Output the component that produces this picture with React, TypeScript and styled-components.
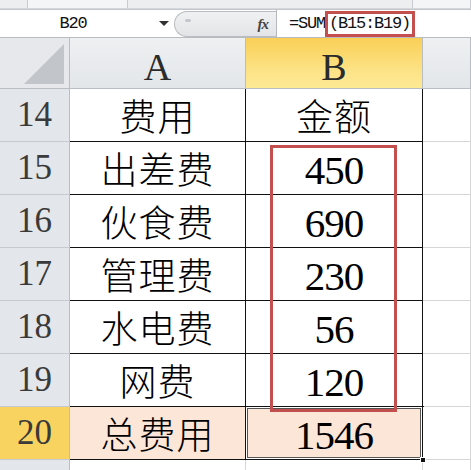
import React from "react";
import styled, { createGlobalStyle, css } from "styled-components";

const GlobalStyle = createGlobalStyle`
  html, body { margin: 0; padding: 0; background: #ffffff; overflow: hidden; }
  body { width: 471px; height: 470px; }
  * { box-sizing: border-box; }
`;

const Page = styled.div`
  width: 471px;
  height: 470px;
  display: flex;
  flex-direction: column;
  overflow: hidden;
  background: #ffffff;
`;

const TopStrip = styled.div`
  flex: none;
  height: 10px;
  display: flex;
  background: #e6e8eb;
  border-bottom: 1px solid #c3c6ca;
`;

const TabBox = styled.div<{ $w: number; $light?: boolean }>`
  width: ${(p) => p.$w}px;
  flex: ${(p) => (p.$w ? "none" : "1")};
  background: ${(p) => (p.$light ? "#f4f5f7" : "#eceef0")};
  border-right: 1px solid #c8cbcf;
  border-bottom: 1px solid #d4d7db;
`;

const FormulaBar = styled.div`
  flex: none;
  height: 28px;
  display: flex;
  align-items: stretch;
  border-bottom: 1px solid #b8bbbf;
  background: #ffffff;
  position: relative;
  z-index: 4;
`;

const NameBox = styled.div`
  width: 174px;
  display: flex;
  align-items: center;
  background: #ffffff;
  position: relative;
`;

const NameText = styled.span`
  flex: 1;
  text-align: center;
  padding-right: 28px;
  font-family: "Liberation Mono", monospace;
  font-size: 17px;
  letter-spacing: -1.2px;
  color: #111;
`;

const DropArrow = styled.span`
  position: absolute;
  right: 5px;
  top: 11px;
  width: 0;
  height: 0;
  border-left: 5px solid transparent;
  border-right: 5px solid transparent;
  border-top: 5px solid #333;
`;

const FxZone = styled.div`
  width: 103px;
  display: flex;
  align-items: center;
  background: #ffffff;
  border-right: 1px solid #b4b7bb;
`;

const Pill = styled.div`
  flex: 1;
  height: 26px;
  margin-top: 1px;
  display: flex;
  align-items: center;
  justify-content: space-between;
  padding: 0 8px 0 10px;
  background: linear-gradient(#f0f1f3, #e2e4e7);
  border: 1px solid #b9bcc0;
  border-right: none;
  border-radius: 14px 0 0 14px;
`;

const Grip = styled.span`
  width: 6px;
  height: 3px;
  border-radius: 2px;
  background: #c3c6ca;
  margin-bottom: 8px;
`;

const FxLabel = styled.span`
  font-family: "Liberation Serif", serif;
  font-style: italic;
  font-weight: bold;
  font-size: 15px;
  color: #444;
  letter-spacing: -1px;
`;

const FormulaInput = styled.div`
  flex: 1;
  display: flex;
  align-items: flex-start;
  padding-left: 12px;
  padding-top: 1px;
  background: #ffffff;
`;

const FormulaText = styled.span`
  font-family: "Liberation Mono", monospace;
  font-size: 17px;
  letter-spacing: -1.2px;
  color: #111;
  white-space: nowrap;
`;

const RangeRef = styled.span`
  display: inline-block;
  height: 26px;
  padding: 0 2px 0 1px;
  border: 3px solid #c3504e;
  line-height: 20px;
`;

const SheetWrap = styled.div`
  position: relative;
  flex: 1;
  min-height: 0;
  overflow: hidden;
`;

const Grid = styled.div`
  display: grid;
  grid-template-columns: 70px 176px 177px 1fr;
  grid-template-rows: 51px repeat(7, 53px) 53px;
`;

const Corner = styled.div`
  background: #e6e8eb;
  border-right: 1px solid #b9bec5;
  border-bottom: 1px solid #b9bec5;
  position: relative;
  &::after {
    content: "";
    position: absolute;
    right: 5px;
    bottom: 4px;
    width: 0;
    height: 0;
    border-left: 40px solid transparent;
    border-bottom: 40px solid #c2c5c9;
  }
`;

const ColHeader = styled.div<{ $active?: boolean }>`
  display: flex;
  align-items: center;
  justify-content: center;
  padding-top: 8px;
  font-family: "Liberation Serif", serif;
  font-size: 38px;
  color: #2b2b2b;
  border-right: 1px solid #b9bec5;
  border-bottom: 1px solid #b9bec5;
  background: ${(p) =>
    p.$active
      ? "linear-gradient(#f9cf56, #fde48a 70%, #fde994)"
      : "linear-gradient(#eef0f2, #e3e6e9)"};
`;

const RowHeader = styled.div<{ $active?: boolean }>`
  display: flex;
  align-items: center;
  justify-content: center;
  font-family: "Liberation Serif", serif;
  font-size: 35px;
  color: #3a3a3a;
  background: ${(p) => (p.$active ? "#f8d35f" : "#e3e6ea")};
  border-right: 1px solid #b9bec5;
  border-bottom: 1px solid #c6cad0;
`;

const Cell = styled.div<{ $table?: boolean; $total?: boolean; $num?: boolean; $selected?: boolean }>`
  position: relative;
  display: flex;
  align-items: center;
  justify-content: center;
  background: ${(p) => (p.$total ? "#fce6d8" : "#ffffff")};
  border-right: 1px solid ${(p) => (p.$table ? "#111" : "#d6d6d6")};
  border-bottom: 1px solid ${(p) => (p.$table ? "#111" : "#d6d6d6")};
  color: #000;
  ${(p) =>
    p.$num
      ? css`
          font-family: "Liberation Serif", serif;
          font-size: 41px;
          letter-spacing: -1px;
          padding-top: 3px;
        `
      : css`
          font-family: "Noto Sans CJK SC", sans-serif;
          font-weight: 300;
          font-size: 37px;
          letter-spacing: 1px;
        `}
  ${(p) =>
    p.$selected &&
    css`
      box-shadow: inset 0 0 0 1px #ffffff, inset 0 0 0 2px #555;
      outline: 1px solid #111;
    `}
`;

const FillHandle = styled.span`
  position: absolute;
  right: -4px;
  bottom: -4px;
  width: 6px;
  height: 6px;
  background: #111;
  border: 1px solid #fff;
  z-index: 2;
`;

const RedOverlay = styled.div`
  position: absolute;
  left: 270px;
  top: 107px;
  width: 127px;
  height: 267px;
  border: 3px solid #c3504e;
  pointer-events: none;
  z-index: 3;
`;

type Row = { n: number; a: string; b: string; total?: boolean };

const rows: Row[] = [
  { n: 14, a: "费用", b: "金额" },
  { n: 15, a: "出差费", b: "450" },
  { n: 16, a: "伙食费", b: "690" },
  { n: 17, a: "管理费", b: "230" },
  { n: 18, a: "水电费", b: "56" },
  { n: 19, a: "网费", b: "120" },
  { n: 20, a: "总费用", b: "1546", total: true },
];

export default function App() {
  return (
    <Page>
      <GlobalStyle />
      <TopStrip>
        <TabBox $w={28} />
        <TabBox $w={100} $light />
        <TabBox $w={285} />
        <TabBox $w={0} $light />
      </TopStrip>
      <FormulaBar>
        <NameBox>
          <NameText>B20</NameText>
          <DropArrow />
        </NameBox>
        <FxZone>
          <Pill>
            <Grip />
            <FxLabel>fx</FxLabel>
          </Pill>
        </FxZone>
        <FormulaInput>
          <FormulaText>
            =SUM<RangeRef>(B15:B19)</RangeRef>
          </FormulaText>
        </FormulaInput>
      </FormulaBar>
      <SheetWrap>
        <Grid>
          <Corner />
          <ColHeader>A</ColHeader>
          <ColHeader $active>B</ColHeader>
          <ColHeader />
          {rows.map((r) => (
            <React.Fragment key={r.n}>
              <RowHeader $active={r.total}>{r.n}</RowHeader>
              <Cell $table $total={r.total}>
                {r.a}
              </Cell>
              <Cell $table $total={r.total} $num={/^\d+$/.test(r.b)} $selected={r.total}>
                {r.b}
                {r.total && <FillHandle />}
              </Cell>
              <Cell />
            </React.Fragment>
          ))}
          <RowHeader />
          <Cell />
          <Cell />
          <Cell />
        </Grid>
        <RedOverlay />
      </SheetWrap>
    </Page>
  );
}
